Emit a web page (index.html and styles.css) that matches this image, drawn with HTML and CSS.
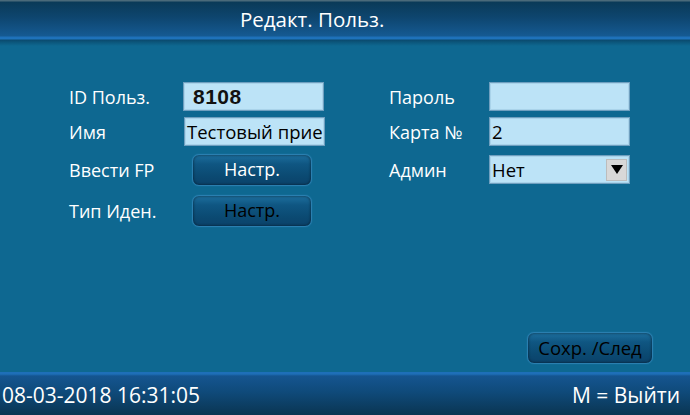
FILE: index.html
```html
<!DOCTYPE html>
<html lang="ru">
<head>
<meta charset="utf-8">
<title>Редакт. Польз.</title>
<link rel="stylesheet" href="styles.css">
</head>
<body>
<div class="screen">
  <header class="topbar"><span class="title">Редакт. Польз.</span></header>
  <main class="content">
    <div class="form">
      <div class="col col-left">
        <div class="row r1"><span class="label">ID Польз.</span><span class="field id">8108</span></div>
        <div class="row r2"><span class="label">Имя</span><span class="field name">Тестовый прие</span></div>
        <div class="row r3"><span class="label">Ввести FP</span><span class="btn light">Настр.</span></div>
        <div class="row r4"><span class="label">Тип Иден.</span><span class="btn">Настр.</span></div>
      </div>
      <div class="col col-right">
        <div class="row r1"><span class="label">Пароль</span><span class="field"></span></div>
        <div class="row r2"><span class="label">Карта №</span><span class="field">2</span></div>
        <div class="row r3"><span class="label">Админ</span><span class="field select">Нет<span class="arrow"><svg width="12" height="9" viewBox="0 0 12 9"><path d="M0 0H12L6 9Z" fill="#000"/></svg></span></span></div>
      </div>
    </div>
    <div class="actions"><span class="btn save">Сохр. /След</span></div>
  </main>
  <footer class="bottombar"><span>08-03-2018 16:31:05</span><span>M = Выйти</span></footer>
</div>
</body>
</html>
```
FILE: styles.css
```css
* { box-sizing: border-box; }
html, body { margin: 0; padding: 0; }
body { width: 690px; height: 415px; overflow: hidden; font-family: "Open Sans", "Noto Sans", sans-serif; background: #0e6891; }
.screen { width: 690px; height: 415px; display: flex; flex-direction: column; }
.topbar {
  height: 46px;
  background:
    linear-gradient(to bottom, #4a6a7a 0, #4a6a7a 1px, #0a3a58 2px, #0e4670 18px, #155a92 36px, #1e70b8 37px, #1f74bc 39px, #0a4a6e 40px, #0c5a80 43px, #0e6891 46px);
  color: #fff;
  font-size: 20.5px;
  padding-left: 240px;
  padding-top: 5px;
  line-height: 28px;
}
.content { flex: 1; display: flex; flex-direction: column; padding-top: 36px; }
.form { display: flex; }
.col { display: flex; flex-direction: column; }
.col-left { width: 325px; padding-left: 66px; }
.col-right { padding-left: 64px; }
.row { display: flex; align-items: center; }
.label { color: #fff; font-size: 18px; width: 118px; white-space: nowrap; }
.col-left .label { padding-left: 3px; width: 117px; }
.col-right .label { width: 100px; }
.r1 { height: 29px; }
.r2 { height: 29px; margin-top: 6px; }
.r3 { height: 31px; margin-top: 8px; }
.r4 { height: 32px; margin-top: 10px; }
.field {
  width: 141px; height: 29px;
  background: #bce3f7;
  border: 1px solid #6f9fbf;
  box-shadow: inset 0 0 0 1px #a9d3ea;
  color: #000;
  font-size: 18.5px;
  line-height: 27px;
  padding-left: 2px;
  white-space: nowrap; overflow: hidden;
}
.field.id { font-weight: bold; font-size: 21px; padding-left: 9px; letter-spacing: 0.5px; color: #111; font-family: "Liberation Sans", sans-serif; }
.r2 .field.name { margin-left: 1px; }
.field.select { display: flex; justify-content: space-between; align-items: center; padding-right: 2px; }
.arrow { width: 21px; height: 22px; background: #d8d8d8; border: 1px solid #bcbcbc; display: flex; align-items: center; justify-content: center; }
.btn {
  width: 120px; height: 32px;
  border-radius: 7px;
  border: 1px solid #2a7fb0;
  background: linear-gradient(to bottom, #1d6f9e 0, #0f5682 30%, #0b4a72 70%, #0b426a 100%);
  box-shadow: inset 0 0 3px rgba(0,0,0,0.6), 0 0 1px #3a8fc0;
  color: #000;
  font-size: 18px;
  text-align: center;
  line-height: 29px;
  margin-left: 10px;
  white-space: nowrap;
}
.col-left .btn { margin-left: 9px; }
.btn.light { color: #fff; }
.actions { display: flex; justify-content: flex-end; padding-right: 37px; margin-top: auto; margin-bottom: 8px; }
.btn.save { width: 126px; margin-left: 0; font-size: 18.5px; }
.bottombar {
  height: 43px;
  background: linear-gradient(to bottom, #1e6fb8 0, #1e6fb8 2px, #155590 4px, #0f4a7a 20px, #0a3552 100%);
  color: #fff;
  font-size: 21px;
  display: flex; justify-content: space-between; align-items: center;
  padding: 3px 10px 0 2px;
}
```
